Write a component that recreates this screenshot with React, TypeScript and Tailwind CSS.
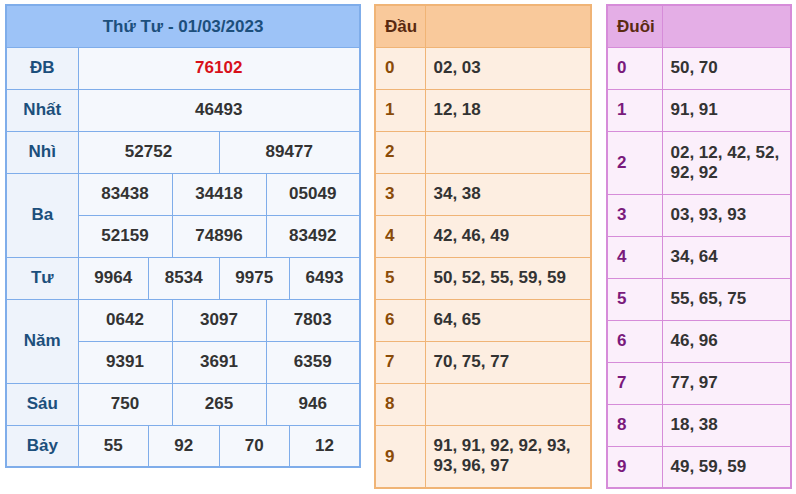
const rows: { label: string; cells: string[][] }[] = [
  { label: "ĐB", cells: [["76102"]] },
  { label: "Nhất", cells: [["46493"]] },
  { label: "Nhì", cells: [["52752", "89477"]] },
  { label: "Ba", cells: [["83438", "34418", "05049"], ["52159", "74896", "83492"]] },
  { label: "Tư", cells: [["9964", "8534", "9975", "6493"]] },
  { label: "Năm", cells: [["0642", "3097", "7803"], ["9391", "3691", "6359"]] },
  { label: "Sáu", cells: [["750", "265", "946"]] },
  { label: "Bảy", cells: [["55", "92", "70", "12"]] },
];

const dau = ["02, 03", "12, 18", "", "34, 38", "42, 46, 49", "50, 52, 55, 59, 59", "64, 65", "70, 75, 77", "", "91, 91, 92, 92, 93, 93, 96, 97"];
const duoi = ["50, 70", "91, 91", "02, 12, 42, 52, 92, 92", "03, 93, 93", "34, 64", "55, 65, 75", "46, 96", "77, 97", "18, 38", "49, 59, 59"];

const font = { fontFamily: '"Liberation Sans", Arial, sans-serif' };

function KQ() {
  return (
    <table className="border-collapse border-2 border-[#7fadea] table-fixed w-[356px] text-[17px] font-bold">
      <colgroup>
        <col className="w-[72px]" />
        {Array.from({ length: 12 }).map((_, i) => (
          <col key={i} />
        ))}
      </colgroup>
      <thead>
        <tr className="h-[42px] bg-[#9dc3f7]">
          <th colSpan={13} className="text-[#1c4f7c] font-bold border border-[#7fadea]">
            Thứ Tư - 01/03/2023
          </th>
        </tr>
      </thead>
      <tbody>
        {rows.map((r) =>
          r.cells.map((line, li) => (
            <tr key={r.label + li} className="h-[42px]">
              {li === 0 && (
                <td rowSpan={r.cells.length} className="text-center text-[#1c4f7c] bg-[#eef3fb] border border-[#7fadea]">
                  {r.label}
                </td>
              )}
              {line.map((v, i) => (
                <td
                  key={i}
                  colSpan={12 / line.length}
                  className={`text-center bg-[#f5f8fd] border border-[#7fadea] ${r.label === "ĐB" ? "text-[#d8101a]" : "text-[#333]"}`}
                >
                  {v}
                </td>
              ))}
            </tr>
          ))
        )}
      </tbody>
    </table>
  );
}

function LoTo({ title, data, w, first, head, border, body, num, tall }: {
  title: string; data: string[]; w: string; first: string; head: string; border: string; body: string; num: string; tall: number[];
}) {
  return (
    <table className={`border-collapse border-2 table-fixed text-[17px] font-bold ${w} ${border}`}>
      <colgroup>
        <col className={first} />
        <col />
      </colgroup>
      <thead>
        <tr className={`h-[42px] ${head}`}>
          <th className={`text-left pl-[9px] border ${border} text-[#5a2a10]`}>{title}</th>
          <th className={`border ${border}`}></th>
        </tr>
      </thead>
      <tbody>
        {data.map((d, i) => (
          <tr key={i} className={tall.includes(i) ? "h-[63px]" : "h-[42px]"}>
            <td className={`pl-[9px] border ${border} ${body} ${num}`}>{i}</td>
            <td className={`pl-[8px] pr-1 leading-[20px] border ${border} ${body} text-[#333]`}>{d}</td>
          </tr>
        ))}
      </tbody>
    </table>
  );
}

export default function App() {
  return (
    <div className="w-[796px] h-[494px] bg-white flex items-start pt-[4px] pl-[5px]" style={font}>
      <KQ />
      <div className="ml-[13px]">
        <LoTo title="Đầu" data={dau} w="w-[218px]" first="w-[50px]" head="bg-[#f9c99b]" border="border-[#f0b476]" body="bg-[#fdeee1]" num="text-[#8a4b08]" tall={[9]} />
      </div>
      <div className="ml-[14px]">
        <LoTo title="Đuôi" data={duoi} w="w-[186px]" first="w-[55px]" head="bg-[#e4aee6]" border="border-[#d68cd9]" body="bg-[#fbeffb]" num="text-[#7a1a7c]" tall={[2]} />
      </div>
    </div>
  );
}
